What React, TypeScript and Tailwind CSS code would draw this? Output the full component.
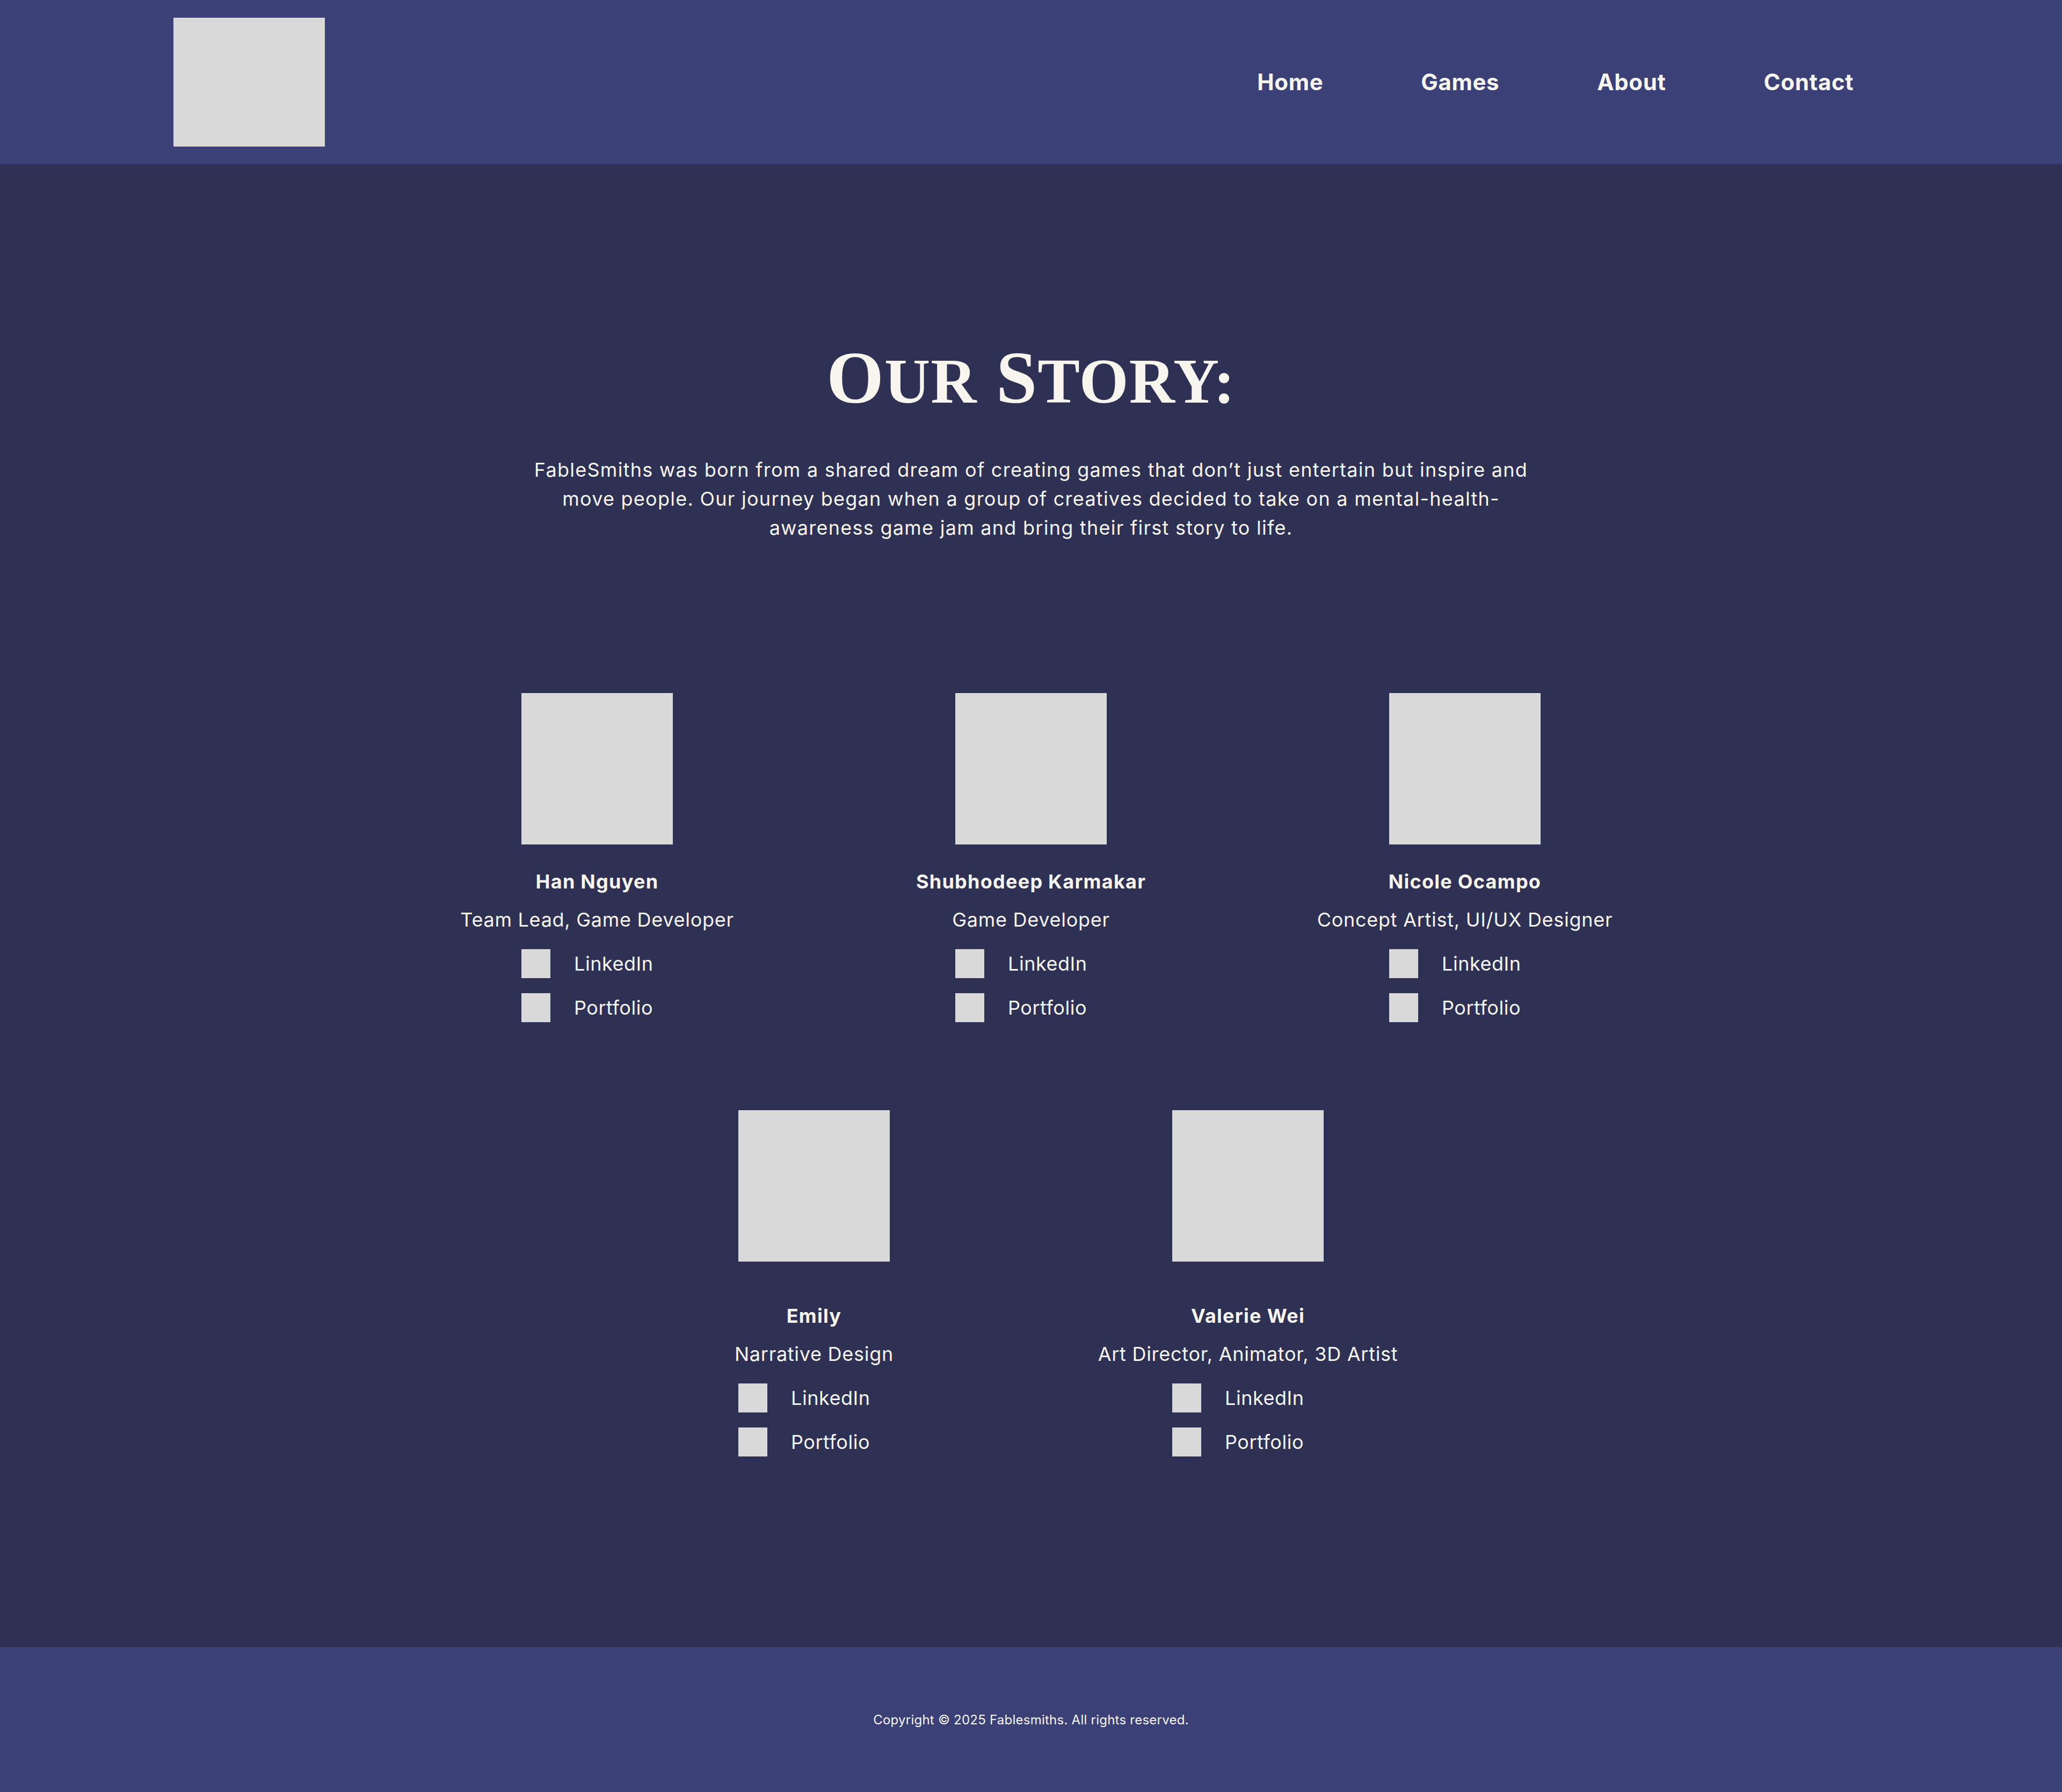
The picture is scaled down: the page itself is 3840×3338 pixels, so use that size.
import React from "react"

type Member = {
	name: string
	role: string
}

const navLinks: string[] = ["Home", "Games", "About", "Contact"]

const rows: Member[][] = [
	[
		{ name: "Han Nguyen", role: "Team Lead, Game Developer" },
		{ name: "Shubhodeep Karmakar", role: "Game Developer" },
		{ name: "Nicole Ocampo", role: "Concept Artist, UI/UX Designer" },
	],
	[
		{ name: "Emily", role: "Narrative Design" },
		{ name: "Valerie Wei", role: "Art Director, Animator, 3D Artist" },
	],
]

function MemberCard({ member, wide }: { member: Member; wide: boolean }) {
	return (
		<div className="w-[808px] flex flex-col items-center">
			<div className="w-[282px] h-[282px] bg-[#d9d9d9]" />
			<h3
				className={`${
					wide ? "mt-[77px]" : "mt-[45px]"
				} text-[36px] leading-[48px] font-bold tracking-[0.035em]`}
			>
				{member.name}
			</h3>
			<p className="mt-[23px] text-[36px] leading-[48px] tracking-[0.02em]">
				{member.role}
			</p>
			<div className="mt-[31px] w-[282px] flex flex-col gap-[28px]">
				{["LinkedIn", "Portfolio"].map((label) => (
					<a
						key={label}
						href="#"
						className="flex items-center gap-[44px] text-[36px] leading-[54px] tracking-[0.015em]"
					>
						<span className="w-[54px] h-[54px] bg-[#d9d9d9]" />
						{label}
					</a>
				))}
			</div>
		</div>
	)
}

export default function App() {
	return (
		<div className="min-h-screen flex flex-col bg-[#2e3154] text-[#f7f5ee] font-['Inter','Liberation_Sans',sans-serif]">
			<header className="h-[306px] bg-[#3b4177] flex items-center justify-between pl-[323px] pr-[388px]">
				<div className="w-[282px] h-[240px] bg-[#d9d9d9]" />
				<nav className="flex items-center gap-[182px]">
					{navLinks.map((link) => (
						<a
							key={link}
							href="#"
							className="text-[42px] font-bold leading-none tracking-[0.015em]"
						>
							{link}
						</a>
					))}
				</nav>
			</header>

			<main className="pt-[330px] pb-[355px] flex flex-col items-center">
				<h1 className="text-[137px] leading-none font-bold font-['Liberation_Serif',serif] tracking-[0.008em]">
					O<span className="uppercase text-[118px]">ur</span> S
					<span className="uppercase text-[118px]">tory:</span>
				</h1>

				<p className="mt-[75px] text-[36px] leading-[54px] text-center tracking-[0.035em]">
					FableSmiths was born from a shared dream of creating games that don’t
					just entertain but inspire and
					<br />
					move people. Our journey began when a group of creatives decided to
					take on a mental-health-
					<br />
					awareness game jam and bring their first story to life.
				</p>

				<div className="mt-[281px] flex flex-col gap-[164px]">
					{rows.map((row, i) => (
						<div key={i} className="flex justify-center">
							{row.map((member) => (
								<MemberCard key={member.name} member={member} wide={i > 0} />
							))}
						</div>
					))}
				</div>
			</main>

			<footer className="h-[272px] bg-[#3b4177] flex items-center justify-center">
				<p className="text-[24px] tracking-[0.01em]">
					Copyright © 2025 Fablesmiths. All rights reserved.
				</p>
			</footer>
		</div>
	)
}
